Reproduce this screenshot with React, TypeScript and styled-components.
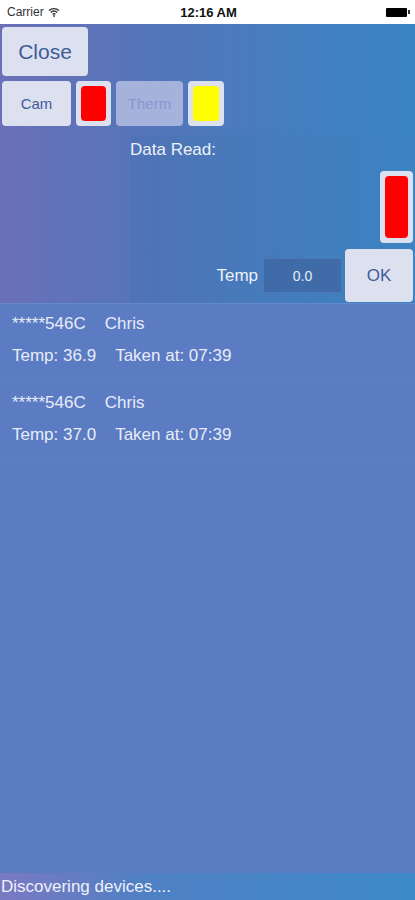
import React from 'react';
import styled, { createGlobalStyle } from 'styled-components';

interface Reading {
	device: string;
	name: string;
	temp: string;
	time: string;
}

const readings: Reading[] = [
	{ device: '*****546C', name: 'Chris', temp: '36.9', time: '07:39' },
	{ device: '*****546C', name: 'Chris', temp: '37.0', time: '07:39' },
];

const GlobalStyle = createGlobalStyle`
	html, body {
		margin: 0;
		padding: 0;
		background: #5b7bc3;
	}
	body {
		font-family: 'Liberation Sans', Arial, sans-serif;
	}
`;

const Screen = styled.div`
	width: 415px;
	height: 900px;
	display: flex;
	flex-direction: column;
	overflow: hidden;
	background: #5b7bc3;
`;

const StatusBar = styled.div`
	height: 24px;
	flex: 0 0 24px;
	background: #ffffff;
	display: grid;
	grid-template-columns: 1fr auto 1fr;
	align-items: center;
	padding: 0 5px 0 7px;
	font-size: 12px;
	color: #222;
`;

const Carrier = styled.div`
	display: flex;
	align-items: center;
	gap: 4px;
	color: #333;
`;

const Clock = styled.div`
	font-size: 13px;
	font-weight: bold;
	color: #111;
`;

const Battery = styled.div`
	justify-self: end;
	display: flex;
	align-items: center;
	&::before {
		content: '';
		width: 21px;
		height: 9px;
		background: #000;
		border-radius: 1px;
	}
	&::after {
		content: '';
		width: 2px;
		height: 4px;
		background: #333;
		margin-left: 1px;
	}
`;

const TopPanel = styled.div`
	height: 280px;
	flex: 0 0 280px;
	display: flex;
	flex-direction: column;
	padding: 3px 2px 0 2px;
	box-sizing: border-box;
	overflow: hidden;
	background: linear-gradient(90deg, #6a70b7 0%, #5575ba 35%, #427fc0 75%, #3a84c3 100%);
	border-bottom: 1px solid #6388cc;
`;

const Row = styled.div`
	display: flex;
	gap: 5px;
	margin-bottom: 5px;
`;

const Button = styled.button<{ $w: number; $h: number; $size?: number; $disabled?: boolean }>`
	width: ${(p) => p.$w}px;
	height: ${(p) => p.$h}px;
	flex: 0 0 auto;
	border: none;
	border-radius: 4px;
	padding: 0;
	font-family: 'Liberation Sans', Arial, sans-serif;
	font-size: ${(p) => p.$size ?? 17}px;
	background: ${(p) => (p.$disabled ? '#a5b3dc' : '#dde1ef')};
	color: ${(p) => (p.$disabled ? '#8698cc' : '#3f5b9a')};
	display: flex;
	align-items: center;
	justify-content: center;
`;

const Swatch = styled.div<{ $w: number; $h: number; $color: string }>`
	width: ${(p) => p.$w}px;
	height: ${(p) => p.$h}px;
	flex: 0 0 auto;
	box-sizing: border-box;
	padding: 5px;
	border-radius: 4px;
	background: #dde1ef;
	display: flex;
	&::after {
		content: '';
		flex: 1;
		border-radius: 4px;
		background: ${(p) => p.$color};
	}
`;

const ReadPanel = styled.div`
	flex: 1;
	margin: 4px -2px 0 128px;
	padding: 5px 2px 0 0;
	display: flex;
	flex-direction: column;
	align-items: flex-end;
	background: linear-gradient(90deg, #5073b6 0%, #457bbc 50%, #3b83c2 100%);
`;

const DataLabel = styled.div`
	align-self: flex-start;
	color: #eef1fa;
	font-size: 17px;
	line-height: 20px;
`;

const TallSwatch = styled(Swatch)`
	margin-top: 11px;
`;

const TempRow = styled.div`
	margin-top: 6px;
	display: flex;
	align-items: center;
	gap: 3px;
`;

const TempLabel = styled.span`
	color: #eef1fa;
	font-size: 17px;
	margin-right: 2px;
`;

const TempInput = styled.div`
	width: 79px;
	height: 35px;
	box-sizing: border-box;
	background: #3f6ba9;
	border: 1px solid #4b79b5;
	color: #e8edf8;
	font-size: 14px;
	display: flex;
	align-items: center;
	justify-content: center;
`;

const List = styled.div`
	flex: 1;
	display: flex;
	flex-direction: column;
`;

const Item = styled.div`
	height: 79px;
	box-sizing: border-box;
	padding: 10px 12px 0;
	border-bottom: 1px solid #5f80c6;
	color: #e8ecf8;
	font-size: 17px;
`;

const Line = styled.div`
	display: flex;
	gap: 19px;
	line-height: 20px;
	margin-bottom: 12px;
`;

const Footer = styled.div`
	height: 27px;
	flex: 0 0 27px;
	display: flex;
	align-items: center;
	padding-left: 1px;
	color: #eef1fa;
	font-size: 17px;
	background: linear-gradient(90deg, #7a79c1 0%, #4f80c4 35%, #3c89c8 100%);
`;

const Wifi = () => (
	<svg width="12" height="10" viewBox="0 0 12 10">
		<path d="M1 3.5 A7.5 7.5 0 0 1 11 3.5" stroke="#333" strokeWidth="1.4" fill="none" />
		<path d="M2.8 5.4 A5 5 0 0 1 9.2 5.4" stroke="#333" strokeWidth="1.4" fill="none" />
		<path d="M4.5 7.2 A2.6 2.6 0 0 1 7.5 7.2" stroke="#333" strokeWidth="1.4" fill="none" />
		<circle cx="6" cy="9" r="0.9" fill="#333" />
	</svg>
);

const App: React.FC = () => (
	<>
		<GlobalStyle />
		<Screen>
			<StatusBar>
				<Carrier>
					Carrier <Wifi />
				</Carrier>
				<Clock>12:16 AM</Clock>
				<Battery />
			</StatusBar>

			<TopPanel>
				<Row>
					<Button $w={86} $h={49} $size={21}>
						Close
					</Button>
				</Row>
				<Row>
					<Button $w={69} $h={45} $size={15}>
						Cam
					</Button>
					<Swatch $w={35} $h={45} $color="#ff0000" />
					<Button $w={67} $h={45} $size={15} $disabled>
						Therm
					</Button>
					<Swatch $w={36} $h={45} $color="#ffff00" />
				</Row>

				<ReadPanel>
					<DataLabel>Data Read:</DataLabel>
					<TallSwatch $w={33} $h={72} $color="#ff0000" />
					<TempRow>
						<TempLabel>Temp</TempLabel>
						<TempInput>0.0</TempInput>
						<Button $w={68} $h={53} $size={17}>
							OK
						</Button>
					</TempRow>
				</ReadPanel>
			</TopPanel>

			<List>
				{readings.map((r, i) => (
					<Item key={i}>
						<Line>
							<span>{r.device}</span>
							<span>{r.name}</span>
						</Line>
						<Line>
							<span>Temp: {r.temp}</span>
							<span>Taken at: {r.time}</span>
						</Line>
					</Item>
				))}
			</List>

			<Footer>Discovering devices....</Footer>
		</Screen>
	</>
);

export default App;
